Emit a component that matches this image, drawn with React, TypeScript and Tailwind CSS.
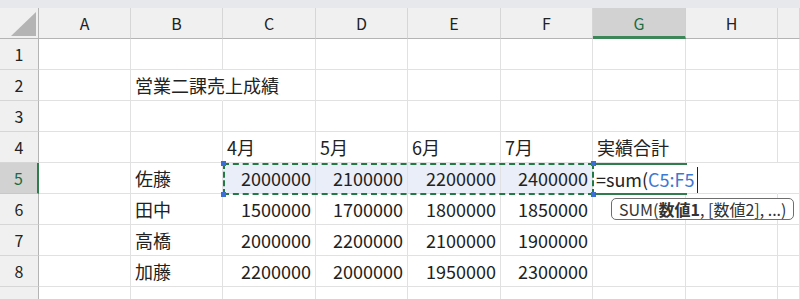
import React from 'react';

const cols = ['A', 'B', 'C', 'D', 'E', 'F', 'G', 'H', ''];

type Row = { n: number; cells: string[] };

const rows: Row[] = [
  { n: 1, cells: ['', '', '', '', '', '', '', '', ''] },
  { n: 2, cells: ['', '営業二課売上成績', '', '', '', '', '', '', ''] },
  { n: 3, cells: ['', '', '', '', '', '', '', '', ''] },
  { n: 4, cells: ['', '', '4月', '5月', '6月', '7月', '実績合計', '', ''] },
  { n: 5, cells: ['', '佐藤', '2000000', '2100000', '2200000', '2400000', '', '', ''] },
  { n: 6, cells: ['', '田中', '1500000', '1700000', '1800000', '1850000', '', '', ''] },
  { n: 7, cells: ['', '高橋', '2000000', '2200000', '2100000', '1900000', '', '', ''] },
  { n: 8, cells: ['', '加藤', '2200000', '2000000', '1950000', '2300000', '', '', ''] },
  { n: 9, cells: ['', '', '', '', '', '', '', '', ''] },
];

const gridCols = 'grid grid-cols-[39px_92px_92px_93px_92px_93px_92px_93px_92px_22px]';
const font = "font-['Noto_Sans_CJK_JP','Noto_Sans',sans-serif]";

function DataCell({ text, row, col }: { text: string; row: number; col: number }) {
  const isNum = /^\d+$/.test(text);
  const selected = row === 5 && col >= 2 && col <= 5;
  // overflow text hides the gridline to its right
  const noRight = (row === 2 && col === 1) || (row === 5 && (col === 6 || col === 7));
  return (
    <div
      className={[
        'relative flex h-[31px] items-center whitespace-nowrap border-b border-r border-[#e1e1e1] px-[4px] pt-[1px] text-[18px] text-[#222]',
        isNum ? 'justify-end' : 'justify-start',
        selected ? 'bg-[#e9eef8]' : '',
        noRight ? 'border-r-transparent' : '',
      ].join(' ')}
    >
      {text}
    </div>
  );
}

export default function App() {
  return (
    <div className={`relative h-[299px] w-[800px] overflow-hidden bg-white ${font}`}>
      <div className="h-[8px] bg-[#e6e8eb]" />

      {/* column headers */}
      <div className={gridCols}>
        <div className="relative h-[31px] border-b border-r border-[#b4b4b4] bg-[#f0f0f0]">
          <svg className="absolute left-0 top-0" width="39" height="31" viewBox="0 0 39 31">
            <polygon points="11,28 36,4 36,28" fill="#b4b4b4" />
          </svg>
        </div>
        {cols.map((c, i) =>
          c === 'G' ? (
            <div
              key={i}
              className="flex h-[31px] items-center justify-center border-b-[3px] border-r border-b-[#3d8658] border-r-[#d0d0d0] bg-[#d2d2d2] pt-[2px] text-[16px] text-[#1d6b3f]"
            >
              {c}
            </div>
          ) : (
            <div
              key={i}
              className="flex h-[31px] items-center justify-center border-b border-r border-b-[#b4b4b4] border-r-[#d6d6d6] bg-[#f0f0f0] text-[16px] text-[#222]"
            >
              {c}
            </div>
          )
        )}
      </div>

      {/* rows */}
      {rows.map((r) => (
        <div key={r.n} className={gridCols}>
          {r.n === 5 ? (
            <div className="flex h-[31px] items-center justify-center border-b border-r-2 border-b-[#c8c8c8] border-r-[#2f7d4c] bg-[#d2d2d2] text-[16px] text-[#1d6b3f]">
              {r.n}
            </div>
          ) : (
            <div className="flex h-[31px] items-center justify-center border-b border-r border-b-[#d6d6d6] border-r-[#b4b4b4] bg-[#f0f0f0] text-[16px] text-[#222]">
              {r.n === 9 ? '' : r.n}
            </div>
          )}
          {r.cells.map((t, i) => (
            <DataCell key={i} text={t} row={r.n} col={i} />
          ))}
        </div>
      ))}

      {/* copy range C5:F5 (marching ants) */}
      <div className="pointer-events-none absolute left-[223px] top-[163px] h-[32px] w-[371px] border-2 border-dashed border-[#237a45]" />
      <div className="absolute left-[221px] top-[161px] h-[5px] w-[5px] bg-[#3b6fd6]" />
      <div className="absolute left-[221px] top-[192px] h-[5px] w-[5px] bg-[#3b6fd6]" />
      <div className="absolute left-[591px] top-[161px] h-[5px] w-[5px] bg-[#3b6fd6]" />
      <div className="absolute left-[591px] top-[192px] h-[5px] w-[5px] bg-[#3b6fd6]" />

      {/* active cell G5 in edit mode */}
      <div className="absolute left-[595px] top-[163px] h-[2px] w-[92px] bg-[#2f7d4c]" />
      <div className="absolute left-[595px] top-[193px] h-[2px] w-[92px] bg-[#2f7d4c]" />
      <div className="absolute left-[596px] top-[165px] flex h-[28px] items-center whitespace-nowrap pt-[1px] text-[18px] text-[#222]">
        <span>=sum(</span>
        <span className="text-[#3f78d1]">C5:F5</span>
        <span className="ml-[2px] h-[26px] w-px bg-[#222]" />
      </div>

      {/* function tooltip */}
      <div className="absolute left-[611px] top-[198px] flex h-[22px] items-center whitespace-nowrap rounded-[5px] border border-[#6e6e6e] bg-white px-[7px] text-[16px] text-[#333]">
        <span>SUM(</span>
        <span className="font-bold">数値1</span>
        <span>, [数値2], ...)</span>
      </div>
    </div>
  );
}
